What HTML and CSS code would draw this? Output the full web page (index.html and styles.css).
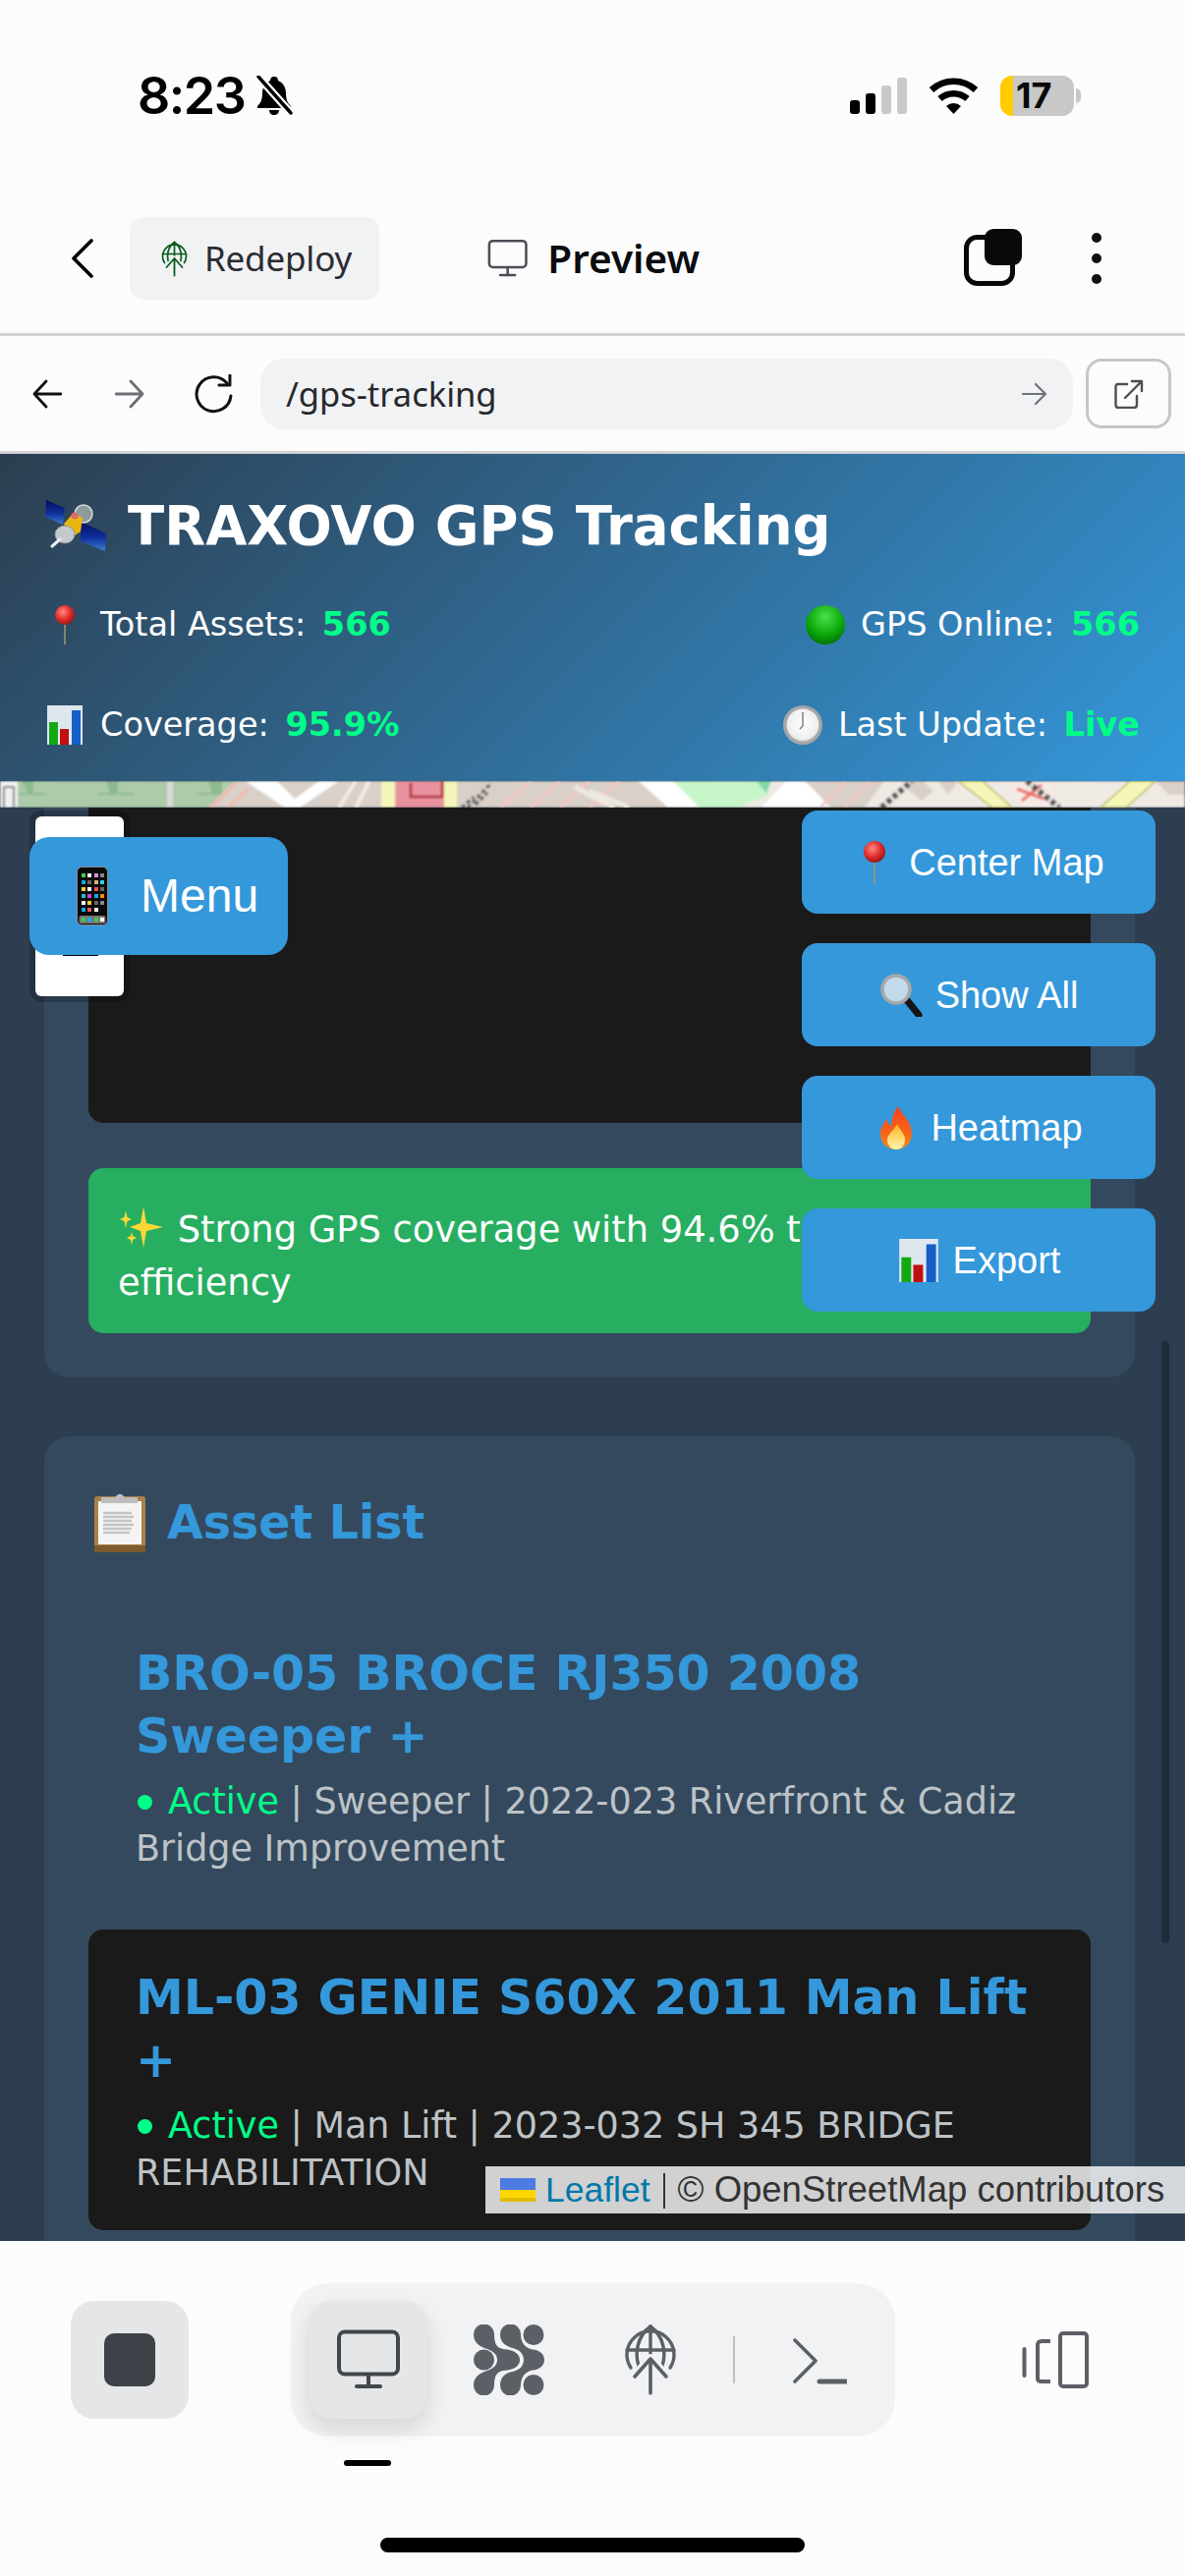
FILE: index.html
```html
<!DOCTYPE html>
<html lang="en">
<head>
<meta charset="utf-8">
<title>TRAXOVO GPS Tracking</title>
<link rel="stylesheet" href="styles.css">
</head>
<body>
<svg class="defs" width="0" height="0" aria-hidden="true">
  <defs>
    <radialGradient id="pinHead" cx="40%" cy="35%" r="70%"><stop offset="0" stop-color="#ff8a80"/><stop offset=".55" stop-color="#e22d2d"/><stop offset="1" stop-color="#8e1414"/></radialGradient>
    <radialGradient id="ballG" cx="50%" cy="30%" r="75%"><stop offset="0" stop-color="#4be04b"/><stop offset=".6" stop-color="#0aa80a"/><stop offset="1" stop-color="#056b05"/></radialGradient>
    <radialGradient id="faceG" cx="50%" cy="45%" r="60%"><stop offset="0" stop-color="#ffffff"/><stop offset=".8" stop-color="#eeeeee"/><stop offset="1" stop-color="#bdbdbd"/></radialGradient>
    <linearGradient id="flameG" x1="0" y1="0" x2="0" y2="1"><stop offset="0" stop-color="#f0441c"/><stop offset=".6" stop-color="#f6651a"/><stop offset="1" stop-color="#ef8a1a"/></linearGradient>
    <linearGradient id="flameIn" x1="0" y1="0" x2="0" y2="1"><stop offset="0" stop-color="#ffb21e"/><stop offset="1" stop-color="#fff6b0"/></linearGradient>
    <linearGradient id="panelG" x1="0" y1="0" x2="0" y2="1"><stop offset="0" stop-color="#050d5e"/><stop offset=".55" stop-color="#10309c"/><stop offset="1" stop-color="#3d7fcf"/></linearGradient>
    <symbol id="pin" viewBox="0 0 40 40">
      <rect x="19.2" y="16" width="1.6" height="24" fill="#9a9078"/>
      <circle cx="20" cy="10" r="10" fill="url(#pinHead)"/>
    </symbol>
    <symbol id="chart" viewBox="0 0 40 40">
      <rect x="2" y="0" width="36" height="40" fill="#dfe7ee"/>
      <rect x="4" y="17" width="9" height="23" fill="#14a814"/>
      <rect x="15" y="24" width="9" height="16" fill="#c01010"/>
      <rect x="27" y="5" width="9" height="35" fill="#1560c8"/>
    </symbol>
    <symbol id="globe" viewBox="0 0 54 72">
      <g fill="none" stroke-linecap="round" stroke-linejoin="round">
        <g stroke="currentColor" stroke-width="3.4">
          <path d="M7 44 A24 24 0 1 1 47 44"/>
          <path d="M3 26 H51"/>
          <path d="M27 2 C13 12 11 30 15 42"/>
          <path d="M27 2 C41 12 43 30 39 42"/>
          <path d="M27 2 V30"/>
        </g>
        <path d="M11 53 L27 35 L43 53" stroke="#f1f2f4" stroke-width="10"/>
        <path d="M11 53 L27 35 L43 53 M27 35 V70" stroke="currentColor" stroke-width="3.6"/>
      </g>
    </symbol>
    <symbol id="monitor" viewBox="0 0 66 62">
      <g fill="none" stroke="currentColor" stroke-linecap="round">
        <rect x="3" y="2.5" width="60" height="43" rx="6" stroke-width="4"/>
        <path d="M33 46 V58" stroke-width="4"/>
        <path d="M21 58 H45" stroke-width="4"/>
      </g>
    </symbol>
  </defs>
</svg>

<main class="phone">
  <header class="status">
    <div class="status-left">
      <span class="clock">8:23</span>
      <svg class="bell" viewBox="0 0 40 40">
        <path d="M20 1 C23 1 24 3 24 5 C29 7 32 12 32 18 C32 25 34 28 37 31 V33 H3 V31 C6 28 8 25 8 18 C8 12 11 7 16 5 C16 3 17 1 20 1 Z M15 35 H25 C25 38 23 40 20 40 C17 40 15 38 15 35 Z" fill="#000"/>
        <path d="M4 1 L37 38" stroke="#fcfcfd" stroke-width="8"/>
        <path d="M4 1 L37 38" stroke="#000" stroke-width="3.4" stroke-linecap="round"/>
      </svg>
    </div>
    <div class="status-right">
      <svg class="signal" viewBox="0 0 58 37">
        <rect x="0" y="23" width="10" height="14" rx="3" fill="#000"/>
        <rect x="16" y="16" width="10" height="21" rx="3" fill="#000"/>
        <rect x="32" y="8" width="10" height="29" rx="3" fill="#c9c9c9"/>
        <rect x="48" y="0" width="10" height="37" rx="3" fill="#c9c9c9"/>
      </svg>
      <svg class="wifi" viewBox="0 0 51 37">
        <path d="M3 12.5 A33 33 0 0 1 48 12.5" fill="none" stroke="#000" stroke-width="6.5"/>
        <path d="M11.5 21.5 A21 21 0 0 1 39.5 21.5" fill="none" stroke="#000" stroke-width="6.5"/>
        <path d="M18 29 A11 11 0 0 1 33 29 L25.5 37 Z" fill="#000"/>
      </svg>
      <div class="battery">17</div>
    </div>
  </header>

  <nav class="topbar">
    <svg class="chev" viewBox="0 0 24 40"><path d="M21 2 L3 20 L21 38" fill="none" stroke="#000" stroke-width="3.6" stroke-linecap="round" stroke-linejoin="round"/></svg>
    <div class="chip">
      <svg class="chip-icon"><use href="#globe"/></svg>
      <span class="chip-text">Redeploy</span>
    </div>
    <div class="title-wrap">
      <svg class="title-icon" viewBox="0 0 66 62"><use href="#monitor"/></svg>
      <span class="title-text">Preview</span>
    </div>
    <div class="top-actions">
      <svg class="layers" viewBox="0 0 59 58">
        <rect x="2.5" y="8.500" width="47" height="47" rx="11" fill="none" stroke="#08090b" stroke-width="5"/>
        <rect x="21" y="0" width="38" height="37" rx="9" fill="#08090b"/>
      </svg>
      <div class="dots"><i class="dot"></i><i class="dot"></i><i class="dot"></i></div>
    </div>
  </nav>

  <div class="urlbar">
    <svg class="nav-ico nav-back" viewBox="0 0 30 30"><path d="M29 15 H2 M14 2 L2 15 L14 28" fill="none" stroke="#111" stroke-width="2.8" stroke-linecap="round" stroke-linejoin="round"/></svg>
    <svg class="nav-ico nav-fwd" viewBox="0 0 30 30"><path d="M1 15 H28 M16 2 L28 15 L16 28" fill="none" stroke="#6b6e75" stroke-width="2.8" stroke-linecap="round" stroke-linejoin="round"/></svg>
    <svg class="nav-reload" viewBox="0 0 44 40"><path d="M35 9 A17.500 17.500 0 1 0 39 22" fill="none" stroke="#111" stroke-width="3" stroke-linecap="round"/><path d="M38 1 V11 H27" fill="none" stroke="#111" stroke-width="3" stroke-linecap="round" stroke-linejoin="round"/></svg>
    <div class="urlfield">
      <span class="urltext">/gps-tracking</span>
      <svg class="url-go" viewBox="0 0 26 26"><path d="M1 13 H24 M14 3 L24 13 L14 23" fill="none" stroke="#6f7278" stroke-width="2.200" stroke-linecap="round" stroke-linejoin="round"/></svg>
    </div>
    <div class="openbtn">
      <svg class="open-ico" viewBox="0 0 30 30"><path d="M13 5 H4 Q1.500 5 1.500 8 V26 Q1.500 29 4 29 H20 Q23 29 23 26 V17" fill="none" stroke="#4c4f56" stroke-width="2.400" stroke-linecap="round"/><path d="M11 19 L28 2 M18 2 H28 V12" fill="none" stroke="#4c4f56" stroke-width="2.400" stroke-linecap="round" stroke-linejoin="round"/></svg>
    </div>
  </div>

  <section class="webview">
    <header class="hero">
      <h1 class="hero-title">
        <svg class="sat" viewBox="0 0 62 52">
          <path d="M1 0 L20 8 L18 25 L0 17 Z" fill="url(#panelG)"/>
          <path d="M36 22 L62 34 L61 52 L36 42 Z" fill="url(#panelG)"/>
          <circle cx="39" cy="14" r="9" fill="#8f9a9d" stroke="#d5dadb" stroke-width="1.500"/>
          <path d="M19 24 L29 13 L38 18 L36 32 L27 38 Z" fill="#e8b70f"/>
          <circle cx="30" cy="16" r="3.500" fill="#e06a6a"/>
          <ellipse cx="20" cy="35" rx="10" ry="9" fill="#c4c9cb" stroke="#8d9698" stroke-width="1"/>
          <path d="M15 40 L7 47" stroke="#eee" stroke-width="3" stroke-linecap="round"/>
        </svg>
        <span>TRAXOVO GPS Tracking</span>
      </h1>
      <div class="stats">
        <div class="stat"><svg class="emoji"><use href="#pin"/></svg><span>Total Assets: <b class="val">566</b></span></div>
        <div class="stat">
          <svg class="emoji" viewBox="0 0 40 40"><circle cx="20" cy="20" r="20" fill="url(#ballG)"/></svg>
          <span>GPS Online: <b class="val">566</b></span>
        </div>
        <div class="stat"><svg class="emoji"><use href="#chart"/></svg><span>Coverage: <b class="val">95.9%</b></span></div>
        <div class="stat">
          <svg class="emoji" viewBox="0 0 40 40"><circle cx="20" cy="20" r="20" fill="#a5a7a8"/><circle cx="20" cy="20" r="16.500" fill="url(#faceG)"/><path d="M20 7 V21 L17 24" fill="none" stroke="#7d7f80" stroke-width="1.500"/></svg>
          <span>Last Update: <b class="val">Live</b></span>
        </div>
      </div>
    </header>

    <svg class="maptile" viewBox="0 0 1206 27" preserveAspectRatio="none">
      <defs><filter id="soft"><feGaussianBlur stdDeviation=".8"/></filter></defs>
      <g filter="url(#soft)">
        <rect width="1206" height="27" fill="#efeae4"/>
        <rect width="300" height="27" fill="#adcbaa"/>
        <path d="M0 0 H18 V27 H0 Z" fill="#f2f2f2"/>
        <path d="M4 6 H14 V27 M4 6 V27" fill="none" stroke="#777" stroke-width="2"/>
        <path d="M22 0 H34 V12 H46 V14 H18 V12 H28 Z M108 0 H120 V12 H136 V14 H100 V12 H112 Z M212 0 H226 V12 H240 V14 H200 V12 H216 Z" fill="#8fba8f"/>
        <rect x="170" width="6" height="27" fill="#d8dcd8"/>
        <path d="M212 27 L238 0 H400 V27 Z" fill="#d9d0c9"/>
        <path d="M215 27 L240 2 M232 27 L252 8" stroke="#f4b8ac" stroke-width="3"/>
        <path d="M250 0 H282 L300 18 L325 0 H345 L305 27 H290 Z" fill="#fff"/>
        <path d="M345 27 L362 0 M362 27 L376 0" stroke="#f3ece6" stroke-width="4"/>
        <rect x="388" width="14" height="27" fill="#f5f7b8"/>
        <rect x="402" width="50" height="27" fill="#e8929f"/>
        <path d="M418 2 V16 H450 V0" fill="none" stroke="#b02a30" stroke-width="2.500"/>
        <rect x="452" width="13" height="27" fill="#f5f7b8"/>
        <path d="M465 0 H650 L680 27 H465 Z" fill="#d9d0c9"/>
        <path d="M510 27 L540 0 M540 27 L570 0 M570 27 L600 0 M600 27 L630 0" stroke="#efc9c4" stroke-width="4"/>
        <path d="M600 10 L640 27 M585 6 L625 27" stroke="#eee8e2" stroke-width="5"/>
        <path d="M650 0 H690 L716 27 H680 Z" fill="#fff"/>
        <path d="M685 0 H770 L785 12 L752 27 H712 Z" fill="#c6f5c8"/>
        <path d="M770 0 H785 L780 12 Z" fill="#7ed8ac"/>
        <path d="M775 27 L800 0 H818 L850 27 Z" fill="#fff"/>
        <path d="M820 0 H900 L880 27 H845 Z" fill="#d9d0c9"/>
        <path d="M835 27 L860 0 M860 27 L885 0" stroke="#efc9c4" stroke-width="3"/>
        <path d="M925 0 H940 L950 10 L938 20 L925 10 Z M955 0 H975 L965 14 Z" fill="#d9d0c9"/>
        <path d="M975 0 H1000 L1030 27 H1010 Z" fill="#f5f7b8" stroke="#b8bc58" stroke-width="1.500"/>
        <path d="M1025 0 H1068 L1075 27 H1040 Z" fill="#f6ebe4"/>
        <path d="M1035 8 L1062 18 M1040 20 L1060 4" stroke="#ef6d6d" stroke-width="3"/>
        <path d="M1120 27 L1150 0 H1176 L1146 27 Z" fill="#f5f7b8" stroke="#b8bc58" stroke-width="1.500"/>
        <path d="M1176 0 H1206 V14 H1190 Z" fill="#d9d0c9"/>
        <path d="M470 27 L482 16 M476 27 L500 2 M484 24 L496 12" stroke="#4a4a4a" stroke-width="3" stroke-dasharray="4 3"/>
        <path d="M897 27 L928 0" stroke="#555" stroke-width="6" stroke-dasharray="5 3"/>
        <path d="M1045 0 L1078 27" stroke="#555" stroke-width="6" stroke-dasharray="5 3"/>
      </g>
    </svg>

    <div class="content">
      <article class="card card-map">
        <div class="mapbox"></div>
        <div class="banner">
          <svg class="sparkle" viewBox="0 0 44 42">
            <path d="M24 0 L27 17 L44 21 L27 25 L24 42 L21 25 L10 21 L21 17 Z M6 4 L7.500 11 L12 13 L7.500 15 L6 22 L4.500 15 L0 13 L4.500 11 Z M12 26 L13 30 L17 32 L13 34 L12 40 L11 34 L7 32 L11 30 Z" fill="#fdd835"/>
          </svg>
          Strong GPS coverage with 94.6% tracking efficiency
        </div>
      </article>

      <article class="card card-list">
        <h2 class="list-head">
          <svg class="clip" viewBox="0 0 52 60">
            <rect x="0" y="3" width="52" height="57" rx="3" fill="#a9814a"/>
            <rect x="4" y="8" width="44" height="44" fill="#f4f4f3"/>
            <path d="M9 20 H38 M9 24 H40 M9 28 H38 M9 32 H40 M9 36 H38 M9 40 H36" stroke="#c4c4c4" stroke-width="2.500"/>
            <path d="M7 10 H44 V4 H31 Q26 -3 21 4 H7 Z" fill="#bdbdbd"/>
            <rect x="0" y="53" width="52" height="7" fill="#7e5a2c"/>
          </svg>
          Asset List
        </h2>
        <div class="asset">
          <h3 class="asset-name">BRO-05 BROCE RJ350 2008 Sweeper +</h3>
          <p class="asset-meta"><span class="active">Active</span> | Sweeper | 2022-023 Riverfront &amp; Cadiz Bridge Improvement</p>
        </div>
        <div class="asset asset-dark">
          <h3 class="asset-name">ML-03 GENIE S60X 2011 Man Lift +</h3>
          <p class="asset-meta"><span class="active">Active</span> | Man Lift | 2023-032 SH 345 BRIDGE REHABILITATION</p>
        </div>
      </article>
      <div class="scrollbar"></div>
    </div>

    <div class="zoomctl"><div class="zoom-minus"></div></div>
    <button class="menu-btn">
      <svg class="phone-emoji" viewBox="0 0 32 60">
        <rect x=".5" y=".5" width="31" height="59" rx="5" fill="#0a0a0a" stroke="#8a8a8a"/>
        <g>
          <rect x="5" y="7" width="4" height="4" fill="#3ecf4f"/><rect x="11" y="7" width="4" height="4" fill="#fff"/><rect x="18" y="7" width="4" height="4" fill="#d78be0"/><rect x="24" y="7" width="4" height="4" fill="#888"/>
          <rect x="5" y="14" width="4" height="4" fill="#14a9ef"/><rect x="11" y="14" width="4" height="4" fill="#666"/><rect x="18" y="14" width="4" height="4" fill="#c9b48a"/><rect x="24" y="14" width="4" height="4" fill="#3bc8e8"/>
          <rect x="5" y="21" width="4" height="4" fill="#f7d038"/><rect x="11" y="21" width="4" height="4" fill="#fff"/><rect x="18" y="21" width="4" height="4" fill="#e8584f"/><rect x="24" y="21" width="4" height="4" fill="#666"/>
          <rect x="5" y="28" width="4" height="4" fill="#22c2c2"/><rect x="11" y="28" width="4" height="4" fill="#d63fd6"/><rect x="18" y="28" width="4" height="4" fill="#14a9ef"/><rect x="24" y="28" width="4" height="4" fill="#f78b00"/>
          <rect x="5" y="35" width="4" height="4" fill="#fff"/><rect x="11" y="35" width="4" height="4" fill="#f7d038"/><rect x="18" y="35" width="4" height="4" fill="#666"/><rect x="24" y="35" width="4" height="4" fill="#888"/>
          <rect x="5" y="42" width="4" height="4" fill="#14a9ef"/><rect x="11" y="42" width="4" height="4" fill="#e8584f"/><rect x="18" y="42" width="4" height="4" fill="#fff"/>
        </g>
        <rect x="2.500" y="50" width="27" height="8" rx="2" fill="#777"/>
        <rect x="5" y="52" width="4" height="4" fill="#3ecf4f"/><rect x="11" y="52" width="4" height="4" fill="#14a9ef"/><rect x="18" y="52" width="4" height="4" fill="#3ecf4f"/><rect x="24" y="52" width="4" height="4" fill="#fff"/>
      </svg>
      <span>Menu</span>
    </button>

    <div class="map-actions">
      <button class="act-btn"><svg class="act-emoji"><use href="#pin"/></svg><span>Center Map</span></button>
      <button class="act-btn">
        <svg class="act-emoji" viewBox="0 0 44 44">
          <path d="M28 27 L40 42" stroke="#151515" stroke-width="7" stroke-linecap="round"/>
          <circle cx="17" cy="16" r="14" fill="#c3d9ec" stroke="#a8a8a8" stroke-width="3.500"/>
        </svg>
        <span>Show All</span>
      </button>
      <button class="act-btn">
        <svg class="act-emoji" viewBox="0 0 44 44">
          <path d="M24 0 C27 8 38 14 38 28 C38 38 30 44 22 44 C13 44 6 38 6 28 C6 21 10 17 12 13 C14 17 15 19 17 20 C18 12 19 6 24 0 Z" fill="url(#flameG)"/>
          <path d="M23 18 C25 24 31 27 31 34 C31 40 27 44 22 44 C17 44 13 40 13 34 C13 28 20 25 23 18 Z" fill="url(#flameIn)"/>
        </svg>
        <span>Heatmap</span>
      </button>
      <button class="act-btn"><svg class="act-emoji"><use href="#chart"/></svg><span>Export</span></button>
    </div>

    <div class="attribution">
      <svg class="flag" viewBox="0 0 36 24"><rect width="36" height="12" fill="#4c7be1"/><rect y="12" width="36" height="8" fill="#ffd500"/><rect y="20" width="36" height="4" fill="#e0bc00"/></svg>
      <a class="leaflet-link">Leaflet</a>
      <i class="attr-sep"></i>
      <span>© OpenStreetMap contributors</span>
    </div>
  </section>

  <footer class="bottom">
    <div class="bottom-row">
      <div class="stop"><i class="stop-sq"></i></div>
      <div class="tabs">
        <div class="tab tab-active"><svg class="tab-monitor" viewBox="0 0 66 62"><use href="#monitor"/></svg></div>
        <div class="tab">
          <svg class="mesh" viewBox="0 0 72 72">
            <g fill="#5c5f66">
              <circle cx="61" cy="10.500" r="10.500"/>
              <circle cx="10.500" cy="36" r="10.500"/>
              <circle cx="61" cy="61.500" r="10.500"/>
              <path d="M0 10 A10.500 10.500 0 0 1 21 10 C21 20 24 24 30 25 C42 26 47 30 47 36 C47 42 42 46 30 47 C24 48 21 52 21 62 A10.500 10.500 0 0 1 0 62 C0 52 8 49 14 47 C22 44 24 40 24 36 C24 32 22 28 14 25 C8 23 0 20 0 10 Z"/>
              <path d="M27 10 A10.500 10.500 0 0 1 48 10 C48 18 52 24 60 25.500 C67 26 72 30 72 36 C72 42 67 46 60 46.500 C52 48 48 54 48 62 A10.500 10.500 0 0 1 27 62 C27 54 32 49 40 48 C48 46 51 41 51 36 C51 31 48 26 40 24 C32 22 27 18 27 10 Z"/>
            </g>
          </svg>
        </div>
        <div class="tab tab-globe"><svg class="tab-globe-ico"><use href="#globe"/></svg></div>
        <i class="tabs-div"></i>
        <div class="tab term">
          <svg class="term-ico" viewBox="0 0 56 48"><path d="M3 2 L24 23 L3 44" fill="none" stroke="#5c5f66" stroke-width="3.600" stroke-linecap="round" stroke-linejoin="round"/><path d="M28 44 H55" stroke="#5c5f66" stroke-width="5" stroke-linecap="round"/></svg>
        </div>
      </div>
      <svg class="panels" viewBox="0 0 68 58">
        <rect x="39" y="2" width="27" height="54" rx="3" fill="none" stroke="#5c5f66" stroke-width="4"/>
        <path d="M29 10 H20 Q16 10 16 14 V48 Q16 51 20 51 H29" fill="none" stroke="#5c5f66" stroke-width="4"/>
        <path d="M2.500 18 V45" stroke="#5c5f66" stroke-width="4" stroke-linecap="round"/>
      </svg>
    </div>
    <i class="tab-indicator"></i>
    <i class="home"></i>
  </footer>
</main>
</body>
</html>
```
FILE: styles.css
```css
* { box-sizing: border-box; }
html, body { margin: 0; padding: 0; }
body { width: 1206px; height: 2622px; overflow: hidden; background: #fcfcfd; font-family: "DejaVu Sans", sans-serif; }
.defs { position: absolute; }
.phone { width: 1206px; height: 2622px; display: flex; flex-direction: column; background: #fcfcfd; }

/* status bar */
.status { height: 160px; flex: none; display: flex; justify-content: space-between; padding: 77px 113px 0 140px; }
.status-left { display: flex; align-items: flex-start; gap: 10px; }
.clock { font: 600 52px/42px Inter, sans-serif; letter-spacing: -1.500px; color: #000; }
.bell { width: 40px; height: 40px; }
.status-right { display: flex; align-items: flex-start; }
.signal { width: 58px; height: 37px; margin-top: 2px; }
.wifi { width: 51px; height: 37px; margin: 2px 0 0 22px; }
.battery { width: 75px; height: 41px; margin-left: 22px; border-radius: 12px; position: relative; background: linear-gradient(90deg, #ffcc00 13px, #c8c8c8 13px); font: 700 36px/41px Inter, sans-serif; color: #0a0a0a; padding-left: 16px; }
.battery::after { content: ""; position: absolute; left: 77px; top: 13px; width: 5px; height: 15px; border-radius: 0 8px 8px 0; background: #c8c8c8; }

/* top bar */
.topbar { height: 182px; flex: none; display: flex; align-items: flex-start; padding: 61px 0 0 72px; border-bottom: 3px solid #d2d3d5; position: relative; }
.chev { width: 24px; height: 40px; margin-top: 22px; }
.chip { width: 254px; height: 84px; margin-left: 36px; background: #f1f2f4; border-radius: 14px; display: flex; align-items: center; padding-left: 32px; gap: 17px; }
.chip-icon { width: 27px; height: 37px; color: #0b5c1c; flex: none; }
.chip-text { font: 400 35px/40px "Noto Sans", sans-serif; color: #2a2c30; letter-spacing: -.2px; }
.title-wrap { display: flex; align-items: center; gap: 20px; height: 84px; margin-left: 110px; flex: none; width: 216px; }
.title-icon { width: 42px; height: 40px; color: #4a4d55; }
.title-text { font: 600 40.500px/44px "Noto Sans", sans-serif; color: #0b0c0e; }
.top-actions { display: flex; align-items: flex-start; gap: 71px; margin-left: 269px; margin-top: 12px; }
.layers { width: 59px; height: 58px; }
.dots { display: flex; flex-direction: column; gap: 11px; margin-top: 4px; }
.dot { display: block; width: 10px; height: 10px; border-radius: 50%; background: #111; }

/* url bar */
.urlbar { height: 120px; flex: none; display: flex; align-items: center; padding: 0 14px 0 33px; border-bottom: 3px solid #d2d3d5; }
.nav-ico { width: 30px; height: 30px; }
.nav-fwd { margin-left: 54px; }
.nav-reload { width: 44px; height: 40px; margin-left: 49px; }
.urlfield { width: 828px; height: 72px; margin-left: 25px; background: #f1f2f4; border-radius: 24px; display: flex; align-items: center; justify-content: space-between; padding: 0 26px 0 26px; }
.urltext { font: 400 34.500px/40px "Noto Sans", sans-serif; color: #26282c; }
.url-go { width: 26px; height: 26px; }
.openbtn { width: 87px; height: 71px; margin-left: 13px; border: 3px solid #c6c7c9; border-radius: 16px; display: flex; align-items: center; justify-content: center; background: #fcfcfd; }
.open-ico { width: 30px; height: 30px; }

/* web view */
.webview { flex: 1; min-height: 0; display: flex; flex-direction: column; position: relative; overflow: hidden; background: #2c3e50; }
.hero { height: 333px; flex: none; padding: 43px 46px 0; background: linear-gradient(135deg, #2c3e50 0%, #3498db 100%); color: #fff; }
.hero-title { margin: 0; display: flex; align-items: center; gap: 22px; font: 700 54.500px/60px "DejaVu Sans", sans-serif; height: 60px; }
.sat { width: 62px; height: 52px; flex: none; }
.stats { display: grid; grid-template-columns: auto auto; justify-content: space-between; row-gap: 62px; margin-top: 51px; }
.stat { display: flex; align-items: center; gap: 16px; font: 400 33.500px/40px "DejaVu Sans", sans-serif; white-space: nowrap; }
.stat:nth-child(even) { justify-self: end; }
.emoji { width: 40px; height: 40px; flex: none; }
.val { color: #00ff88; font-weight: 700; margin-left: 6px; }
.maptile { display: block; width: 1206px; height: 27px; flex: none; }

.content { flex: 1; min-height: 0; padding: 0 51px 0 45px; display: flex; flex-direction: column; gap: 60px; position: relative; overflow: hidden; }
.card { background: #34495e; flex: none; }
.card-map { padding: 0 45px 45px; border-radius: 0 0 25px 25px; display: flex; flex-direction: column; gap: 46px; }
.mapbox { height: 321px; background: #1a1a1a; border-radius: 0 0 15px 15px; }
.banner { height: 168px; background: #27ae60; border-radius: 15px; color: #fff; padding: 36px 30px 0 30px; font: 400 36.800px/54px "DejaVu Sans", sans-serif; }
.sparkle { width: 44px; height: 42px; vertical-align: -6px; margin: 0 3px 0 2px; }
.card-list { padding: 45px 45px 0; border-radius: 25px 25px 0 0; }
.list-head { margin: 0 0 41px; height: 86px; display: flex; align-items: center; gap: 22px; font: 700 47.500px/86px "DejaVu Sans", sans-serif; color: #3498db; padding-left: 6px; }
.clip { width: 52px; height: 60px; flex: none; }
.asset { padding: 38px 48px 34px; height: 306px; border-radius: 15px; margin-bottom: 24px; }
.asset-dark { background: #1a1a1a; }
.asset-name { margin: 0 0 10px; font: 700 49px/64px "DejaVu Sans", sans-serif; color: #3498db; }
.asset-meta { margin: 0; font: 400 36.500px/48px "DejaVu Sans", sans-serif; color: #bdc3c7; }
.active { color: #00ff88; }
.active::before { content: ""; display: inline-block; width: 15px; height: 15px; border-radius: 50%; background: #00ff88; margin: 0 16px 3px 2px; vertical-align: middle; }
.scrollbar { position: absolute; left: 1182px; top: 543px; width: 8px; height: 613px; border-radius: 4px; background: rgba(0,0,0,.28); }

/* overlays */
.zoomctl { position: absolute; left: 30px; top: 363px; width: 102px; height: 195px; background: #fff; border: 6px solid rgba(0,0,0,.2); background-clip: padding-box; border-radius: 12px; }
.zoom-minus { position: absolute; left: 28px; top: 138px; width: 36px; height: 4px; background: #000; }
.menu-btn { position: absolute; left: 30px; top: 390px; width: 263px; height: 120px; border: 0; border-radius: 20px; background: #3498db; color: #fff; display: flex; align-items: center; gap: 33px; padding: 0 0 0 48px; font: 400 48px/56px "Liberation Sans", sans-serif; }
.phone-emoji { width: 32px; height: 60px; flex: none; }
.map-actions { position: absolute; left: 816px; top: 363px; width: 360px; display: flex; flex-direction: column; gap: 30px; }
.act-btn { height: 105px; border: 0; border-radius: 16px; background: #3498db; color: #fff; display: flex; align-items: center; justify-content: center; gap: 13px; padding: 0; font: 400 38px/44px "Liberation Sans", sans-serif; }
.act-emoji { width: 44px; height: 44px; flex: none; }
.attribution { position: absolute; right: 0; bottom: 28px; width: 712px; height: 48px; background: rgba(255,255,255,.8); display: flex; align-items: center; gap: 10px; padding-left: 15px; font: 400 36.500px/48px "Liberation Sans", sans-serif; color: #333; white-space: nowrap; }
.flag { width: 36px; height: 24px; flex: none; }
.leaflet-link { color: #0078a8; font-size: 35.500px; }
.attr-sep { display: block; width: 2px; height: 36px; background: #333; margin: 2px 3px 0; }

/* bottom bar */
.bottom { height: 341px; flex: none; background: #fcfcfd; position: relative; display: flex; flex-direction: column; }
.bottom-row { display: flex; align-items: flex-start; padding: 43px 0 0 72px; height: 220px; }
.stop { width: 120px; height: 120px; margin-top: 18px; border-radius: 24px; background: #e5e6e8; display: flex; align-items: center; justify-content: center; }
.stop-sq { display: block; width: 52px; height: 54px; border-radius: 10px; background: #3f4148; }
.tabs { width: 615px; height: 156px; margin-left: 104px; border-radius: 38px; background: #f1f2f4; display: flex; align-items: center; padding-left: 18px; }
.tab { height: 120px; display: flex; align-items: center; justify-content: center; }
.tab-active { width: 121px; background: #e5e6e8; border-radius: 24px; box-shadow: 0 10px 24px rgba(0,0,0,.12); color: #44464d; }
.tab-monitor { width: 66px; height: 62px; }
.mesh { width: 72px; height: 72px; margin-left: 47px; }
.tab-globe { color: #5c5f66; margin-left: 81px; }
.tab-globe-ico { width: 54px; height: 72px; }
.tabs-div { display: block; width: 2px; height: 48px; background: #bfc0c3; margin-left: 57px; }
.term { margin-left: 58px; }
.term-ico { width: 56px; height: 48px; margin-top: 4px; }
.panels { width: 68px; height: 58px; margin: 49px 0 0 129px; }
.tab-indicator { position: absolute; left: 350px; top: 223px; width: 48px; height: 6px; border-radius: 3px; background: #000; }
.home { position: absolute; left: 387px; top: 302px; width: 432px; height: 15px; border-radius: 8px; background: #000; }
```
